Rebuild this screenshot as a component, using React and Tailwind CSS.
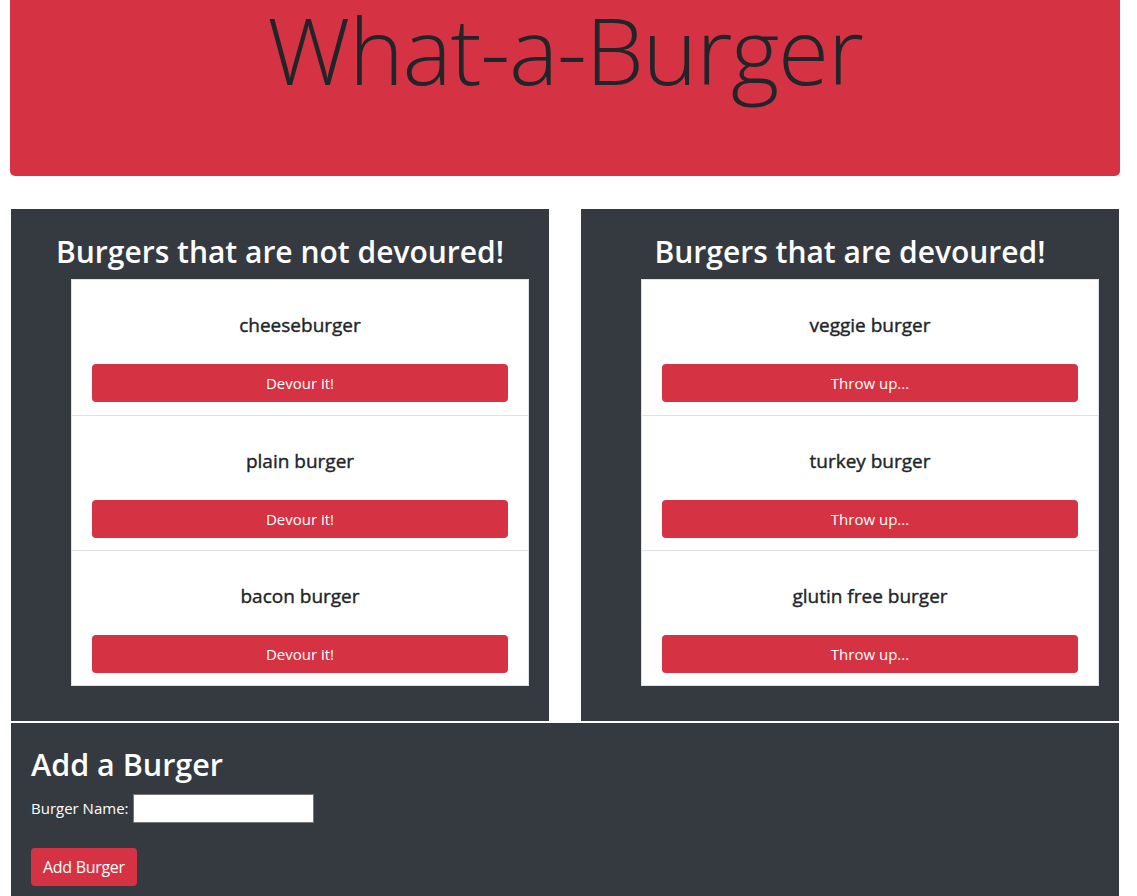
export default function App() {
  const left = ["cheeseburger", "plain burger", "bacon burger"];
  const right = ["veggie burger", "turkey burger", "glutin free burger"];
  const font = { fontFamily: '"Open Sans", "Noto Sans", sans-serif' };
  const Panel = ({ title, items, btn }) => (
    <div className="w-[538px] bg-[#343a40] pt-[24px] pb-[35px]">
      <h2 className="text-center text-white text-[30px] font-semibold leading-[38px] mb-[8px]">{title}</h2>
      <ul className="ml-[60px] mr-[20px] bg-white border border-[#dee2e6]">
        {items.map((it, i) => (
          <li key={it} className={"h-[135px] px-[20px] pt-[21px] " + (i > 0 ? "border-t border-[#dee2e6]" : "")}>
            <div className="text-center text-[19px] font-medium text-[#212529] leading-[48px] [-webkit-text-stroke:0.4px_#212529]">{it}</div>
            <button className="mt-[15px] w-full h-[38px] rounded-[4px] bg-[#d53343] text-white text-[15px] leading-[38px]">{btn}</button>
          </li>
        ))}
      </ul>
    </div>
  );
  return (
    <div style={font} className="w-[1137px] h-[896px] overflow-hidden bg-white">
      <div className="mx-[10px] w-[1110px] h-[176px] bg-[#d53343] rounded-b-[5px] flex justify-center">
        <h1 className="text-[93px] font-light leading-[96px] text-[#212529] tracking-[-1.3px] pt-[1px]">What-a-Burger</h1>
      </div>
      <div className="mt-[33px] ml-[11px] flex gap-[32px]">
        <Panel title="Burgers that are not devoured!" items={left} btn="Devour it!" />
        <Panel title="Burgers that are devoured!" items={right} btn="Throw up..." />
      </div>
      <div className="ml-[11px] mt-[2px] w-[1108px] h-[174px] bg-[#343a40] px-[20px] pt-[22px]">
        <h2 className="text-white text-[30.5px] font-semibold leading-[38px]">Add a Burger</h2>
        <div className="mt-[11px] flex items-center gap-[4px]">
          <label className="text-white text-[15px]">Burger Name:</label>
          <input className="w-[181px] h-[29px] bg-white border border-[#767676]" />
        </div>
        <button className="mt-[25px] h-[38px] px-[12px] rounded-[4px] bg-[#d53343] text-white text-[16px] tracking-[-0.3px]">Add Burger</button>
      </div>
    </div>
  );
}
